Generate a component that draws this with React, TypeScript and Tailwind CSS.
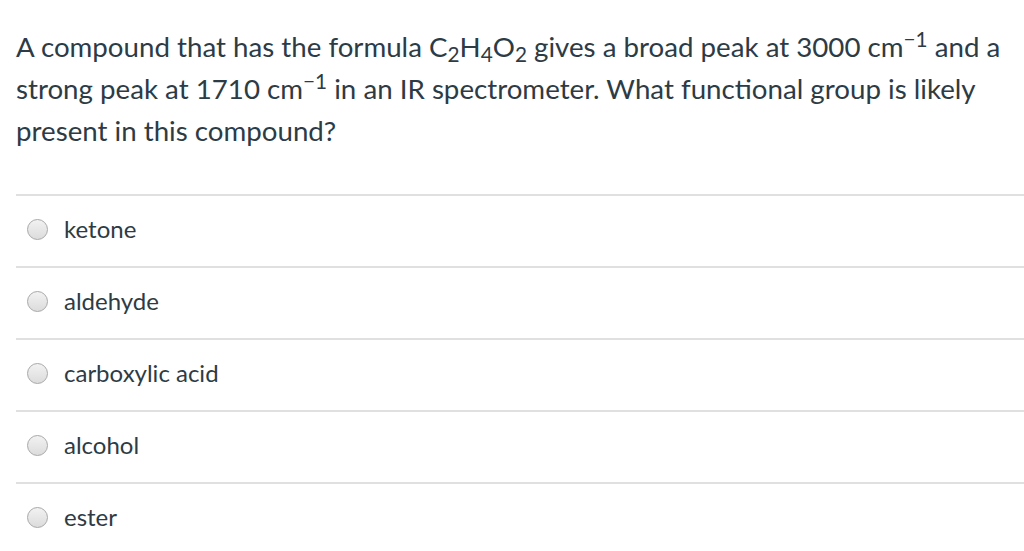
const options = ["ketone", "aldehyde", "carboxylic acid", "alcohol", "ester"];

const Cm = () => (
  <>
    cm<sup>−1</sup>
  </>
);

export default function App() {
  return (
    <div
      className="min-h-[551px] w-[1024px] bg-white text-[#2d3b45]"
      style={{ fontFamily: "Lato, 'Liberation Sans', sans-serif" }}
    >
      <div className="pl-4 pt-[26px]">
        <p className="text-[27.7px] leading-[42px]">
          A compound that has the formula C<sub>2</sub>H<sub>4</sub>O<sub>2</sub> gives a broad peak at 3000 <Cm /> and
          a strong peak at 1710 <Cm /> in an IR spectrometer. What functional group is likely present in this compound?
        </p>

        <div className="mt-[42px]">
          {options.map((o) => (
            <div key={o} className="flex h-[72px] items-center border-t-2 border-[#e0e0e0] pb-1">
              <span className="ml-[11px] h-[21px] w-[21px] rounded-full border border-[#a8a8a8] bg-gradient-to-b from-[#f2f2f2] to-[#dcdcdc]" />
              <span className="ml-4 text-[24px] text-[#2d3b45]">{o}</span>
            </div>
          ))}
        </div>
      </div>
    </div>
  );
}
